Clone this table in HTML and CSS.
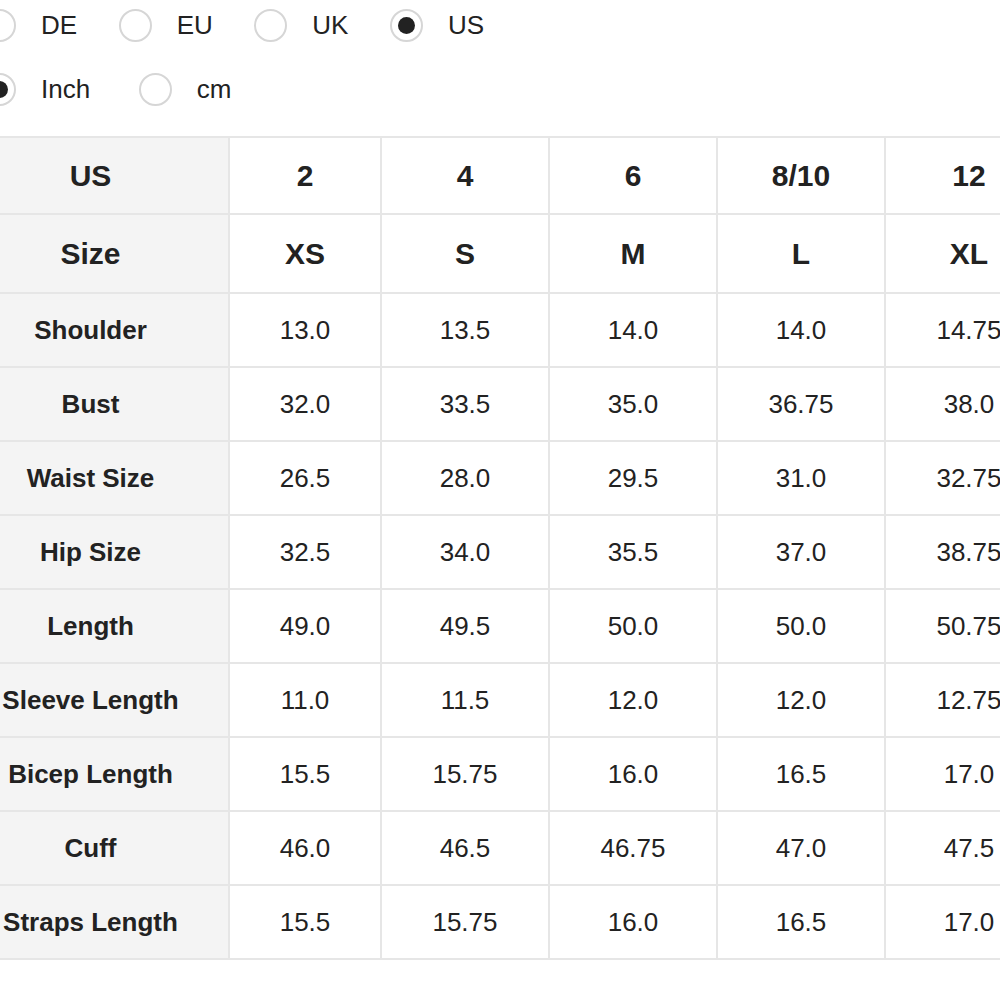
FILE: index.html
```html
<!DOCTYPE html>
<html>
<head>
<meta charset="utf-8">
<link rel="stylesheet" href="styles.css">
</head>
<body>
<div class="page">
  <div class="options">
    <div class="opt-row">
      <label class="opt"><span class="radio"></span><span class="opt-label">DE</span></label>
      <label class="opt"><span class="radio"></span><span class="opt-label">EU</span></label>
      <label class="opt"><span class="radio"></span><span class="opt-label">UK</span></label>
      <label class="opt"><span class="radio checked"></span><span class="opt-label">US</span></label>
    </div>
    <div class="opt-row unit-row">
      <label class="opt"><span class="radio checked"></span><span class="opt-label">Inch</span></label>
      <label class="opt"><span class="radio"></span><span class="opt-label">cm</span></label>
    </div>
  </div>

  <table class="size-table">
    <colgroup>
      <col class="c-label"><col class="c-narrow"><col class="c-wide"><col class="c-wide"><col class="c-wide"><col class="c-wide">
    </colgroup>
    <tbody>
      <tr class="head-row"><th>US</th><th>2</th><th>4</th><th>6</th><th>8/10</th><th>12</th></tr>
      <tr class="head-row head-row-size"><th>Size</th><th>XS</th><th>S</th><th>M</th><th>L</th><th>XL</th></tr>
      <tr><th>Shoulder</th><td>13.0</td><td>13.5</td><td>14.0</td><td>14.0</td><td>14.75</td></tr>
      <tr><th>Bust</th><td>32.0</td><td>33.5</td><td>35.0</td><td>36.75</td><td>38.0</td></tr>
      <tr><th>Waist Size</th><td>26.5</td><td>28.0</td><td>29.5</td><td>31.0</td><td>32.75</td></tr>
      <tr><th>Hip Size</th><td>32.5</td><td>34.0</td><td>35.5</td><td>37.0</td><td>38.75</td></tr>
      <tr><th>Length</th><td>49.0</td><td>49.5</td><td>50.0</td><td>50.0</td><td>50.75</td></tr>
      <tr><th>Sleeve Length</th><td>11.0</td><td>11.5</td><td>12.0</td><td>12.0</td><td>12.75</td></tr>
      <tr><th>Bicep Length</th><td>15.5</td><td>15.75</td><td>16.0</td><td>16.5</td><td>17.0</td></tr>
      <tr><th>Cuff</th><td>46.0</td><td>46.5</td><td>46.75</td><td>47.0</td><td>47.5</td></tr>
      <tr><th>Straps Length</th><td>15.5</td><td>15.75</td><td>16.0</td><td>16.5</td><td>17.0</td></tr>
    </tbody>
  </table>
</div>
</body>
</html>
```
FILE: styles.css
```css
html, body {
  margin: 0;
  padding: 0;
  overflow: hidden;
  background: #ffffff;
}
body {
  font-family: "Liberation Sans", Arial, sans-serif;
  color: #222222;
}
.page {
  width: 1000px;
}
.options {
  padding-top: 9px;
  display: flex;
  flex-direction: column;
  gap: 31px;
}
.opt-row {
  display: flex;
  align-items: center;
  gap: 41.5px;
  margin-left: -17px;
  height: 33px;
}
.unit-row {
  gap: 48.5px;
}
.opt {
  display: flex;
  align-items: center;
  gap: 25px;
  font-size: 26px;
  line-height: 33px;
}
.radio {
  width: 29px;
  height: 29px;
  border: 2px solid #d6d6d6;
  border-radius: 50%;
  display: flex;
  align-items: center;
  justify-content: center;
  flex: none;
  background: #fff;
}
.radio.checked::after {
  content: "";
  width: 17px;
  height: 17px;
  border-radius: 50%;
  background: #222222;
}
.opt-label {
  display: block;
}
.size-table {
  margin-top: 30px;
  margin-left: -49px;
  border-collapse: collapse;
  table-layout: fixed;
  width: 1103px;
}
.c-label { width: 277px; }
.c-narrow { width: 152px; }
.c-wide { width: 168px; }
.size-table th,
.size-table td {
  border: 2px solid #e6e6e6;
  text-align: center;
  padding: 0;
  height: 72px;
  font-size: 26px;
  color: #222222;
}
.size-table th { font-weight: bold; }
.size-table td { font-weight: normal; }
.size-table tr > :first-child {
  background: #f4f4f4;
}
.head-row th {
  height: 75px;
  font-size: 30px;
}
.head-row-size th {
  height: 77px;
}
```
